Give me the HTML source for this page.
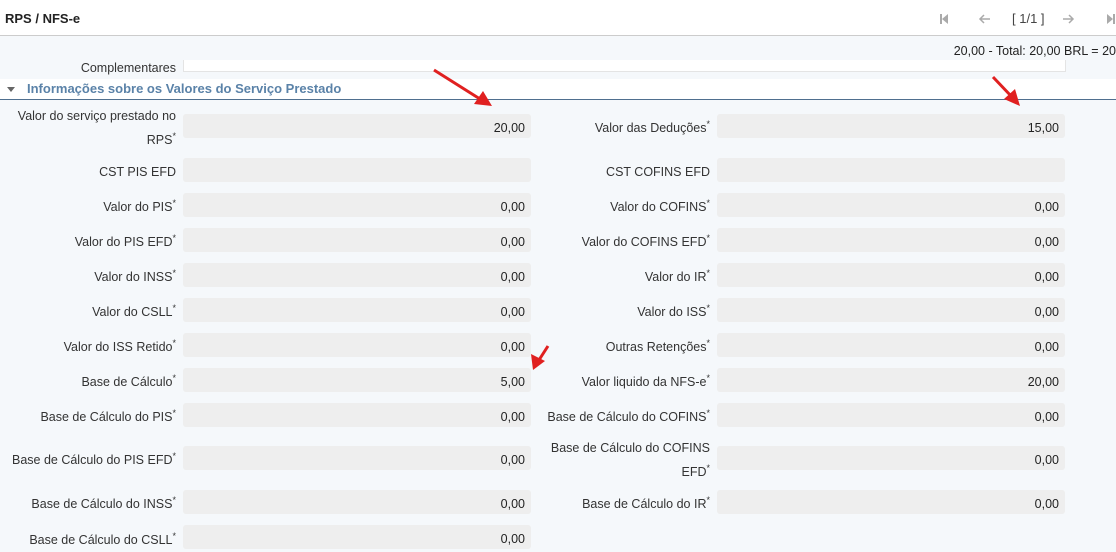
<!DOCTYPE html>
<html><head><meta charset="utf-8"><style>
*{margin:0;padding:0;box-sizing:border-box}
body{width:1116px;height:537px;overflow:hidden;background:#f5f8fb;font-family:"Liberation Sans",sans-serif;font-size:12.5px;color:#333;position:relative}
.top{position:absolute;left:0;top:0;width:1116px;height:36px;background:#fff;border-bottom:1px solid #ccc}
.title{position:absolute;left:5px;top:11px;font-weight:bold;font-size:13px;color:#222}
.nav{position:absolute;top:11px;color:#aaa;font-size:13px}
.lbl{position:absolute;text-align:right;white-space:nowrap;line-height:24px;padding-top:2px}
.lbl sup{font-size:9px;vertical-align:top;position:relative;top:-4px}
.inp{position:absolute;height:24px;background:#eee;border-radius:3px;text-align:right;padding-right:6px;line-height:24px;padding-top:2px;color:#222}
.sec{position:absolute;left:0;top:79px;width:1116px;height:21px;background:#fff;border-bottom:1px solid #4f6f8f}
.sec span{position:absolute;left:27px;top:2px;font-weight:bold;color:#5a82a8;font-size:13px}
.tri{position:absolute;left:7px;top:8px;width:0;height:0;border-left:4px solid transparent;border-right:4px solid transparent;border-top:5px solid #666}
</style></head><body>
<div class="top"><div class="title">RPS / NFS-e</div>
<svg style="position:absolute;left:938px;top:13px" width="12" height="12"><rect x="2" y="1" width="2" height="10" fill="#aaa"/><polygon points="10,1 10,11 4,6" fill="#aaa"/></svg>
<svg style="position:absolute;left:978px;top:13px" width="14" height="12"><path d="M12 6H2M6 2L2 6L6 10" stroke="#aaa" stroke-width="1.5" fill="none"/></svg>
<div class="nav" style="left:1012px;color:#444">[ 1/1 ]</div>
<svg style="position:absolute;left:1062px;top:13px" width="14" height="12"><path d="M1 6H11M7 2L11 6L7 10" stroke="#aaa" stroke-width="1.5" fill="none"/></svg>
<svg style="position:absolute;left:1105px;top:13px" width="12" height="12"><rect x="8" y="1" width="2" height="10" fill="#aaa"/><polygon points="2,1 2,11 8,6" fill="#aaa"/></svg>
</div>
<div style="position:absolute;right:0;top:44px;white-space:nowrap;color:#222">20,00 - Total: 20,00 BRL = 20</div>
<div class="lbl" style="right:940px;top:54px">Complementares</div>
<div style="position:absolute;left:183px;top:60px;width:883px;height:12px;background:#fff;border:1px solid #e4e4e4;border-top:none"></div>
<div class="sec"><div class="tri"></div><span>Informações sobre os Valores do Serviço Prestado</span></div>

<div class="lbl" style="right:940px;top:102px;line-height:24px">Valor do serviço prestado no<br>RPS<sup>*</sup></div>
<div class="inp" style="left:183px;top:114px;width:348px">20,00</div>
<div class="lbl" style="right:406px;top:114px">Valor das Deduções<sup>*</sup></div>
<div class="inp" style="left:717px;top:114px;width:348px">15,00</div>

<div class="lbl" style="right:940px;top:158px">CST PIS EFD</div>
<div class="inp" style="left:183px;top:158px;width:348px"></div>
<div class="lbl" style="right:406px;top:158px">CST COFINS EFD</div>
<div class="inp" style="left:717px;top:158px;width:348px"></div>

<div class="lbl" style="right:940px;top:193px">Valor do PIS<sup>*</sup></div>
<div class="inp" style="left:183px;top:193px;width:348px">0,00</div>
<div class="lbl" style="right:406px;top:193px">Valor do COFINS<sup>*</sup></div>
<div class="inp" style="left:717px;top:193px;width:348px">0,00</div>

<div class="lbl" style="right:940px;top:228px">Valor do PIS EFD<sup>*</sup></div>
<div class="inp" style="left:183px;top:228px;width:348px">0,00</div>
<div class="lbl" style="right:406px;top:228px">Valor do COFINS EFD<sup>*</sup></div>
<div class="inp" style="left:717px;top:228px;width:348px">0,00</div>

<div class="lbl" style="right:940px;top:263px">Valor do INSS<sup>*</sup></div>
<div class="inp" style="left:183px;top:263px;width:348px">0,00</div>
<div class="lbl" style="right:406px;top:263px">Valor do IR<sup>*</sup></div>
<div class="inp" style="left:717px;top:263px;width:348px">0,00</div>

<div class="lbl" style="right:940px;top:298px">Valor do CSLL<sup>*</sup></div>
<div class="inp" style="left:183px;top:298px;width:348px">0,00</div>
<div class="lbl" style="right:406px;top:298px">Valor do ISS<sup>*</sup></div>
<div class="inp" style="left:717px;top:298px;width:348px">0,00</div>

<div class="lbl" style="right:940px;top:333px">Valor do ISS Retido<sup>*</sup></div>
<div class="inp" style="left:183px;top:333px;width:348px">0,00</div>
<div class="lbl" style="right:406px;top:333px">Outras Retenções<sup>*</sup></div>
<div class="inp" style="left:717px;top:333px;width:348px">0,00</div>

<div class="lbl" style="right:940px;top:368px">Base de Cálculo<sup>*</sup></div>
<div class="inp" style="left:183px;top:368px;width:348px">5,00</div>
<div class="lbl" style="right:406px;top:368px">Valor liquido da NFS-e<sup>*</sup></div>
<div class="inp" style="left:717px;top:368px;width:348px">20,00</div>

<div class="lbl" style="right:940px;top:403px">Base de Cálculo do PIS<sup>*</sup></div>
<div class="inp" style="left:183px;top:403px;width:348px">0,00</div>
<div class="lbl" style="right:406px;top:403px">Base de Cálculo do COFINS<sup>*</sup></div>
<div class="inp" style="left:717px;top:403px;width:348px">0,00</div>

<div class="lbl" style="right:940px;top:446px">Base de Cálculo do PIS EFD<sup>*</sup></div>
<div class="inp" style="left:183px;top:446px;width:348px">0,00</div>
<div class="lbl" style="right:406px;top:434px">Base de Cálculo do COFINS<br>EFD<sup>*</sup></div>
<div class="inp" style="left:717px;top:446px;width:348px">0,00</div>

<div class="lbl" style="right:940px;top:490px">Base de Cálculo do INSS<sup>*</sup></div>
<div class="inp" style="left:183px;top:490px;width:348px">0,00</div>
<div class="lbl" style="right:406px;top:490px">Base de Cálculo do IR<sup>*</sup></div>
<div class="inp" style="left:717px;top:490px;width:348px">0,00</div>

<div class="lbl" style="right:940px;top:526px">Base de Cálculo do CSLL<sup>*</sup></div>
<div class="inp" style="left:183px;top:525px;width:348px">0,00</div>

<svg style="position:absolute;left:0;top:0" width="1116" height="537">
<g stroke="#e02020" stroke-width="3" fill="#e02020">
<line x1="434" y1="70" x2="480" y2="99"/>
<polygon points="492,106 474,104 483,91" stroke="none"/>
<line x1="993" y1="77" x2="1012" y2="97"/>
<polygon points="1020,106 1004,99 1015,89" stroke="none"/>
<line x1="548" y1="346" x2="539" y2="360"/>
<polygon points="533,370 531,354 545,361" stroke="none"/>
</g></svg>
</body></html>
